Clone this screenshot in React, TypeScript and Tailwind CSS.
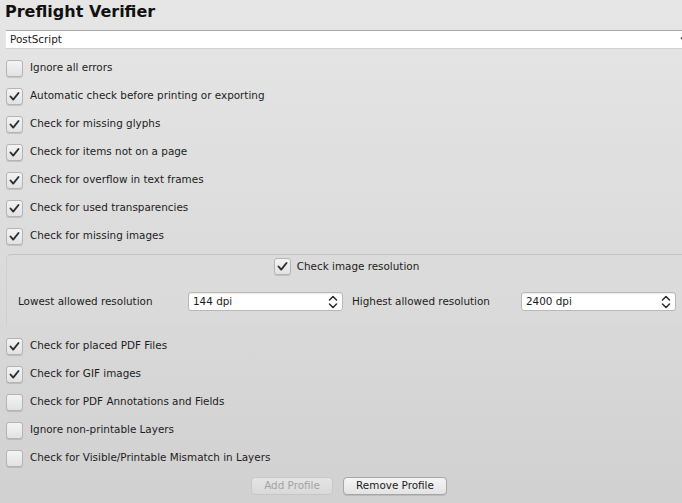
import React from 'react'

const topChecks = [
  { label: 'Ignore all errors', checked: false },
  { label: 'Automatic check before printing or exporting', checked: true },
  { label: 'Check for missing glyphs', checked: true },
  { label: 'Check for items not on a page', checked: true },
  { label: 'Check for overflow in text frames', checked: true },
  { label: 'Check for used transparencies', checked: true },
  { label: 'Check for missing images', checked: true },
]

const bottomChecks = [
  { label: 'Check for placed PDF Files', checked: true },
  { label: 'Check for GIF images', checked: true },
  { label: 'Check for PDF Annotations and Fields', checked: false },
  { label: 'Ignore non-printable Layers', checked: false },
  { label: 'Check for Visible/Printable Mismatch in Layers', checked: false },
]

const CheckBox = ({ checked }: { checked: boolean }) => (
  <div className="flex h-[17px] w-[17px] shrink-0 items-center justify-center rounded-[3px] border border-[#b4b4b4] bg-gradient-to-b from-[#f4f4f4] to-[#e2e2e2] shadow-[0_1px_0_rgba(0,0,0,0.12)]">
    {checked && (
      <svg width="13" height="13" viewBox="0 0 13 13">
        <path d="M2.5 6.5 L5.2 9.6 L10.5 3" fill="none" stroke="#2f2f2f" strokeWidth="1.9" strokeLinecap="round" strokeLinejoin="round" />
      </svg>
    )}
  </div>
)

const CheckRow = ({ label, checked }: { label: string; checked: boolean }) => (
  <div className="flex h-[28px] items-center gap-[7px] pl-[6px]">
    <CheckBox checked={checked} />
    <span className="text-[10.4px] text-[#1c1c1c]">{label}</span>
  </div>
)

const SpinBox = ({ value }: { value: string }) => (
  <div className="flex h-[19px] w-[155px] items-center justify-between rounded-[3px] border border-[#b8b8b8] bg-white pl-[4px] pr-[4px] shadow-[inset_0_1px_1px_rgba(0,0,0,0.08)]">
    <span className="text-[10.4px] text-[#1c1c1c]">{value}</span>
    <svg width="10" height="14" viewBox="0 0 10 14">
      <path d="M1.5 5 L5 1.5 L8.5 5 M1.5 9 L5 12.5 L8.5 9" fill="none" stroke="#2a2a2a" strokeWidth="1.5" strokeLinecap="round" strokeLinejoin="round" />
    </svg>
  </div>
)

export default function App() {
  return (
    <div className="relative h-[503px] w-[682px] overflow-hidden bg-gradient-to-b from-[#e6e6e6] to-[#d1d1d1] font-['DejaVu_Sans',sans-serif] text-[#1c1c1c]">
      <div className="h-[26px] pl-[5px] pt-[2px] text-[16px] font-bold leading-[20px] text-[#111]">Preflight Verifier</div>

      <div className="ml-[6px] mt-[4px] flex h-[18px] w-[690px] items-center justify-between border-t border-[#a9a9a9] bg-white pl-[4px] pr-[5px] shadow-[0_1px_0_rgba(0,0,0,0.08)]">
        <span className="text-[10.4px]">PostScript</span>
        <svg width="10" height="8" viewBox="0 0 10 8" className="mr-[1px]">
          <path d="M1.5 2 L5 5.5 L8.5 2" fill="none" stroke="#2a2a2a" strokeWidth="1.6" strokeLinecap="round" strokeLinejoin="round" />
        </svg>
      </div>

      <div className="mt-[6px]">
        {topChecks.map((c) => (
          <CheckRow key={c.label} label={c.label} checked={c.checked} />
        ))}
      </div>

      <div className="ml-[6px] mt-[4px] h-[72px] w-[690px] rounded-tl-[5px] border-l border-t border-[#c3c3c3] border-l-[#d0d0d0] bg-[#dcdcdc]/40">
        <div className="flex h-[21px] items-center justify-center gap-[6px] pr-[10px] pt-[2px]">
          <CheckBox checked={true} />
          <span className="text-[10.4px]">Check image resolution</span>
        </div>
        <div className="mt-[16px] flex items-center">
          <span className="w-[181px] pl-[11px] text-[10.4px]">Lowest allowed resolution</span>
          <SpinBox value="144 dpi" />
          <span className="w-[178px] pl-[9px] text-[10.4px]">Highest allowed resolution</span>
          <SpinBox value="2400 dpi" />
        </div>
      </div>

      <div className="mt-[6px]">
        {bottomChecks.map((c) => (
          <CheckRow key={c.label} label={c.label} checked={c.checked} />
        ))}
      </div>

      <div className="mt-[5px] flex justify-center gap-[10px] pl-[16px]">
        <button className="h-[18px] w-[82px] rounded-[4px] border border-[#c6c6c6] bg-gradient-to-b from-[#e4e4e4] to-[#d9d9d9] text-[10.4px] text-[#a3a3a3]">
          Add Profile
        </button>
        <button className="h-[18px] w-[104px] rounded-[4px] border border-[#a6a6a6] bg-gradient-to-b from-[#f5f5f5] to-[#e3e3e3] text-[10.4px] text-[#1c1c1c] shadow-[0_1px_0_rgba(0,0,0,0.1)]">
          Remove Profile
        </button>
      </div>
    </div>
  )
}
